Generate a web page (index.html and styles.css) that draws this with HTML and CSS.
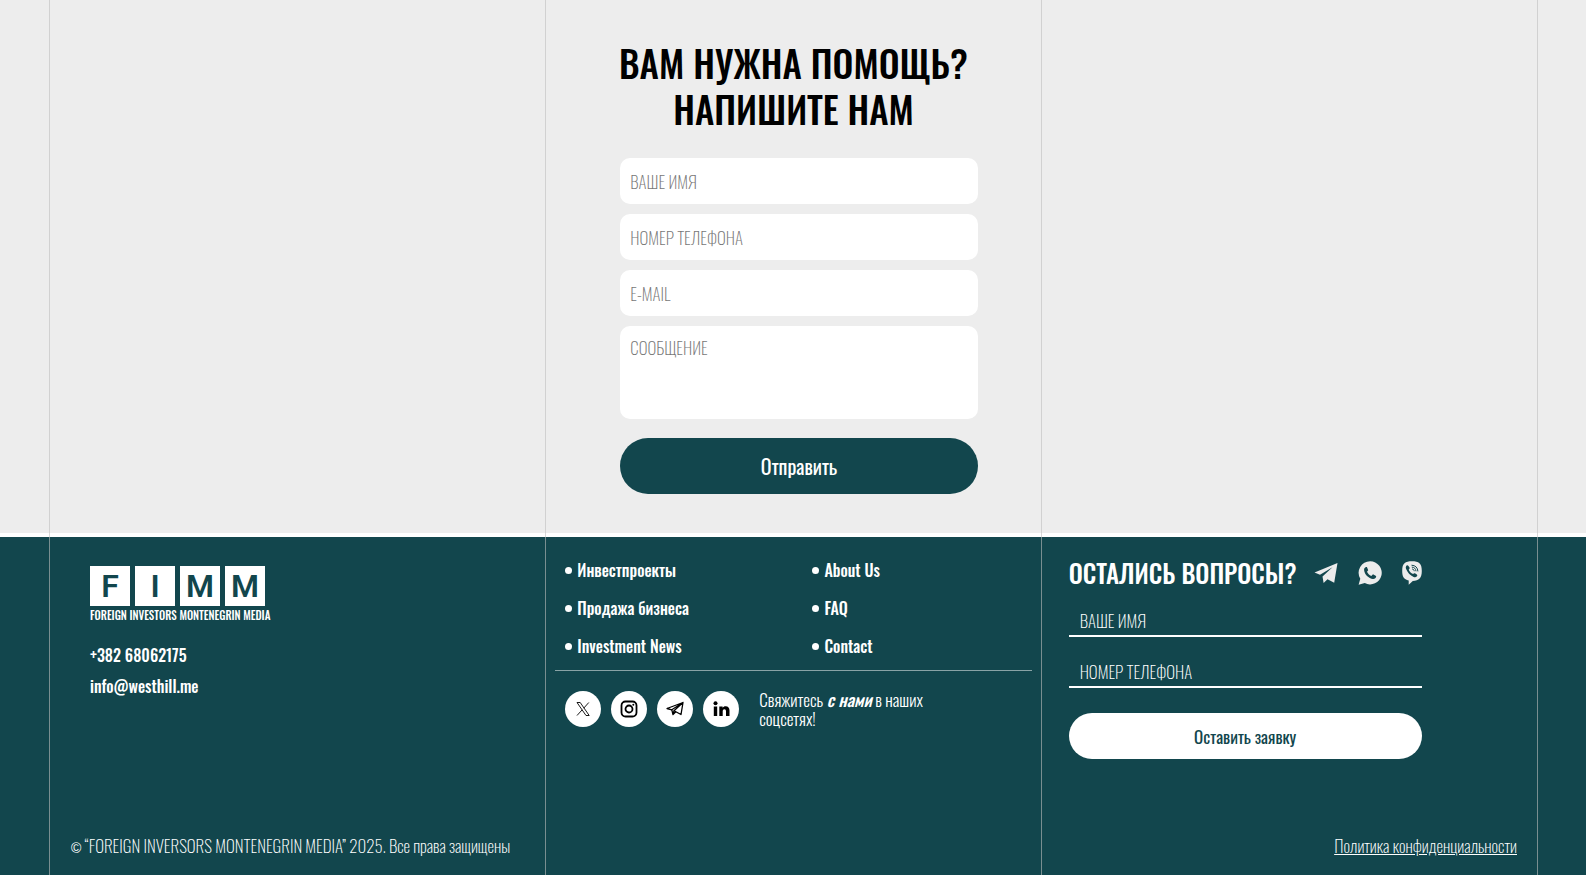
FILE: index.html
```html
<!DOCTYPE html>
<html lang="ru">
<head>
  <meta charset="UTF-8">
  <meta name="viewport" content="width=device-width, initial-scale=1.0">
  <title>FIMM</title>
  <link rel="stylesheet" href="styles.css">
</head>
<body>
  <div class="lines"><span></span><span></span><span></span></div>

  <main class="help">
    <div class="help__inner">
      <h1 class="help__title">ВАМ НУЖНА ПОМОЩЬ?<br>НАПИШИТЕ НАМ</h1>
      <form class="help__form">
        <input class="field" type="text" name="name" placeholder="ВАШЕ ИМЯ" aria-label="Ваше имя">
        <input class="field" type="tel" name="phone" placeholder="НОМЕР ТЕЛЕФОНА" aria-label="Номер телефона">
        <input class="field" type="email" name="email" placeholder="E-MAIL" aria-label="E-mail">
        <textarea class="field field--area" name="message" placeholder="СООБЩЕНИЕ" aria-label="Сообщение"></textarea>
        <button class="btn" type="submit">Отправить</button>
      </form>
    </div>
  </main>

  <footer class="footer">
    <div class="footer__top">
      <div class="contacts">
        <a class="logo" href="#">
          <span class="logo__row"><b>F</b><b>I</b><b>M</b><b>M</b></span>
          <span class="logo__text">FOREIGN INVESTORS MONTENEGRIN MEDIA</span>
        </a>
        <a class="contacts__link" href="tel:+38268062175">+382 68062175</a>
        <a class="contacts__link" href="mailto:info@westhill.me">info@westhill.me</a>
      </div>

      <div class="middle">
        <nav class="menu">
          <a href="#">Инвестпроекты</a>
          <a href="#">About Us</a>
          <a href="#">Продажа бизнеса</a>
          <a href="#">FAQ</a>
          <a href="#">Investment News</a>
          <a href="#">Contact</a>
        </nav>
        <div class="social">
          <a class="social__item" href="#" aria-label="X">
            <svg width="14" height="14" viewBox="0 0 14 14" fill="none" stroke="#000" stroke-width="0.9"><path d="M1 .5h3.200l9 13H10z"/><path d="M12.800.5 7.700 6.200M6.200 7.800 1 13.500"/></svg>
          </a>
          <a class="social__item" href="#" aria-label="Instagram">
            <svg width="18" height="18" viewBox="0 0 18 18" fill="none" stroke="#000" stroke-width="1.800"><rect x="1.500" y="1.500" width="15" height="15" rx="4"/><circle cx="9" cy="9" r="3.500"/><circle cx="13.300" cy="4.700" r="1" fill="#000" stroke="none"/></svg>
          </a>
          <a class="social__item" href="#" aria-label="Telegram">
            <svg width="18" height="16" viewBox="0 0 18 16" fill="none" stroke="#000" stroke-width="1.300" stroke-linejoin="round"><path d="M1 7.500 17 1.500 15 13.500 8 9.800 17 1.500 5.800 8.800z"/><path d="M5.800 8.800 7 13.500 9.800 10.800M8 9.800 7 13.500"/></svg>
          </a>
          <a class="social__item" href="#" aria-label="LinkedIn">
            <svg width="17" height="16" viewBox="0 0 17 16"><circle cx="2.500" cy="2.200" r="2"/><path d="M.8 5.500h3.400V15H.8zM6.300 5.500h3.300v1.200c.6-.9 1.600-1.500 3-1.500 2.700 0 3.900 1.700 3.900 4.400V15H13v-4.800c0-1.300-.5-2-1.600-2s-1.700.8-1.700 2V15H6.300z"/></svg>
          </a>
          <p class="social__text">Свяжитесь <b><i>с нами</i></b> в наших соцсетях!</p>
        </div>
      </div>

      <div class="ask">
        <div class="ask__head">
          <h2 class="ask__title">ОСТАЛИСЬ ВОПРОСЫ?</h2>
          <div class="ask__icons">
            <a href="#" aria-label="Telegram">
              <svg width="24" height="24" viewBox="0 0 24 24" fill="#ececec"><path d="M.5 11.500 23.500 2l-3.300 19.800-6.700-3.600-3.900 3.700-1.100-6.400L18.500 6.200 6 13.700z"/></svg>
            </a>
            <a href="#" aria-label="WhatsApp">
              <svg width="24" height="24" viewBox="0 0 24 24" fill="#ececec"><path fill-rule="evenodd" d="M12.200.2a11.600 11.600 0 1 1-5.400 21.900L.6 23.700l1.700-6A11.600 11.600 0 0 1 12.200.2zM8 6c-1.200.4-2 1.600-1.900 3.100.3 4.300 4.600 8.600 8.900 9 1.700.1 3-.8 3.200-2.500l-.2-.7-3-1.600-1.700 1.700c-2-.8-3.500-2.300-4.300-4.200l1.200-1.600L8.900 6z"/></svg>
            </a>
            <a href="#" aria-label="Viber">
              <svg width="20" height="24" viewBox="0 0 20 24"><path fill="#ececec" d="M10 .3c6.800 0 9.800 1.800 9.800 9.700 0 7.200-2.800 9.600-9 9.900L6.700 23.700v-4.300C1.800 18.500.2 15.800.2 10 .2 2.100 3.200.3 10 .3z"/><path fill="#12464d" d="M4.600 4.500c1-.8 1.600-.3 2.800 1.800.5 1 .2 1.600-.7 2.200.7 2.100 2.200 3.700 4.400 4.600.7-.9 1.300-1.100 2.200-.6 2 1.200 2.500 1.800 1.600 2.800-.8 1-1.900 1.300-3.200.7-3.600-1.700-6.300-4.600-7.700-8.300-.4-1.200-.2-2.400.6-3.200z"/><path fill="none" stroke="#12464d" stroke-width="1" d="M9.500 4.200c4 .2 6.200 2.400 6.400 6.200M9.800 6.100c2.700.2 4 1.600 4.200 4.200M10.100 8c1.300.1 2 .8 2.100 2.200"/></svg>
            </a>
          </div>
        </div>
        <form class="ask__form">
          <input class="line-field" type="text" name="name" placeholder="ВАШЕ ИМЯ" aria-label="Ваше имя">
          <input class="line-field" type="tel" name="phone" placeholder="НОМЕР ТЕЛЕФОНА" aria-label="Номер телефона">
          <button class="btn btn--white" type="submit">Оставить заявку</button>
        </form>
      </div>
    </div>

    <div class="footer__bottom">
      <p><span class="copy">©</span> “FOREIGN INVERSORS MONTENEGRIN MEDIA” 2025. Все права защищены</p>
      <a href="#">Политика конфиденциальности</a>
    </div>
  </footer>
</body>
</html>
```

FILE: styles.css
```css
* { margin: 0; padding: 0; box-sizing: border-box; }

body {
  position: relative;
  min-height: 100vh;
  display: flex;
  flex-direction: column;
  background: #ededed;
  font-family: Oswald, "Roboto Condensed", Roboto, sans-serif;
  font-weight: 200;
  color: #000;
}

a { color: inherit; text-decoration: none; }
input, textarea, button { font-family: inherit; font-weight: 200; border: none; outline: none; }

/* vertical guide lines across the whole page */
.lines {
  position: absolute;
  inset: 0 48px 0 49px;
  z-index: 2;
  display: grid;
  grid-template-columns: repeat(3, 1fr);
  border-right: 1px solid rgba(190, 190, 190, 0.6);
  pointer-events: none;
}
.lines span { border-left: 1px solid rgba(190, 190, 190, 0.6); }

/* help form */
.help {
  display: grid;
  grid-template-columns: repeat(3, 1fr);
  padding: 40px 48px 39px 49px;
}
.help__inner { grid-column: 2; }
.help__title {
  font-size: 37px;
  font-weight: 500;
  line-height: 46px;
  text-align: center;
  white-space: nowrap;
}
.help__form {
  display: flex;
  flex-direction: column;
  gap: 10px;
  width: 72%;
  margin: 26px 0 0 75px;
}
.field {
  width: 100%;
  height: 46px;
  padding: 0 10px;
  border-radius: 10px;
  background: #fff;
  font-size: 17px;
}
.field--area { height: 93px; padding-top: 9px; resize: none; }
.field::placeholder { color: #777; opacity: 1; }

.btn {
  height: 56px;
  margin-top: 9px;
  border-radius: 28px;
  background: #12464d;
  color: #fff;
  font-size: 20px;
  font-weight: 400;
  cursor: pointer;
}
.btn--white {
  height: 46px;
  background: #fff;
  color: #12464d;
  font-size: 17px;
}

/* footer */
.footer {
  flex: 1;
  display: flex;
  flex-direction: column;
  border-top: 4px solid #fff;
  background: #12464d;
  color: #fff;
}
.footer__top {
  display: grid;
  grid-template-columns: repeat(3, 1fr);
  padding: 0 48px 0 49px;
}

.contacts {
  display: flex;
  flex-direction: column;
  align-items: flex-start;
  padding: 29px 0 0 41px;
}
.contacts__link { margin-bottom: 11px; font-size: 16px; line-height: 20px; font-weight: 500; }
.logo { margin-bottom: 21px; }
.logo__row { display: flex; gap: 5px; }
.logo__row b {
  width: 40px;
  height: 40px;
  background: #fff;
  color: #12464d;
  font-family: Roboto, sans-serif;
  font-size: 32px;
  font-weight: 600;
  line-height: 40px;
  text-align: center;
}
.logo__text { display: block; font-size: 11px; line-height: 18px; font-weight: 500; white-space: nowrap; }

.middle { padding: 14px 10px 0; }
.menu {
  display: grid;
  grid-template-columns: 53% 47%;
  padding: 0 0 5px 10px;
  border-bottom: 1px solid rgba(255, 255, 255, 0.5);
  font-size: 16px;
  line-height: 38px;
  font-weight: 500;
}
.menu a { display: flex; align-items: center; gap: 5px; }
.menu a::before {
  content: "";
  width: 7px;
  height: 7px;
  border-radius: 50%;
  background: #fff;
}
.social { display: flex; align-items: center; gap: 10px; padding: 19px 0 0 10px; }
.social__item {
  display: flex;
  align-items: center;
  justify-content: center;
  width: 36px;
  height: 36px;
  border-radius: 50%;
  background: #fff;
}
.social__text { width: 180px; margin-left: 10px; font-size: 17px; font-weight: 300; line-height: 19px; }
.social__text b { font-weight: 500; }

.ask { width: 380px; padding: 22px 0 0 27px; }
.ask__head { display: flex; align-items: center; justify-content: space-between; height: 28px; }
.ask__icons { display: flex; gap: 20px; }
.ask__icons a { display: flex; }
.ask__title { font-size: 25px; line-height: 28px; font-weight: 500; white-space: nowrap; }
.ask__form { display: flex; flex-direction: column; padding-top: 8px; }
.line-field {
  height: 42px;
  margin-bottom: 9px;
  padding: 10px 11px 0;
  border-bottom: 2px solid #fff;
  background: transparent;
  color: #fff;
  font-size: 17px;
}
.line-field::placeholder { color: #fff; opacity: 1; }
.ask__form .btn { margin-top: 16px; }

.footer__bottom {
  display: flex;
  justify-content: space-between;
  margin-top: auto;
  padding: 0 69px 19px 71px;
  font-size: 17px;
  line-height: 20px;
}
.footer__bottom a { text-decoration: underline; }
.copy { font-family: "Liberation Sans", sans-serif; font-size: 14px; line-height: 1; }
```
